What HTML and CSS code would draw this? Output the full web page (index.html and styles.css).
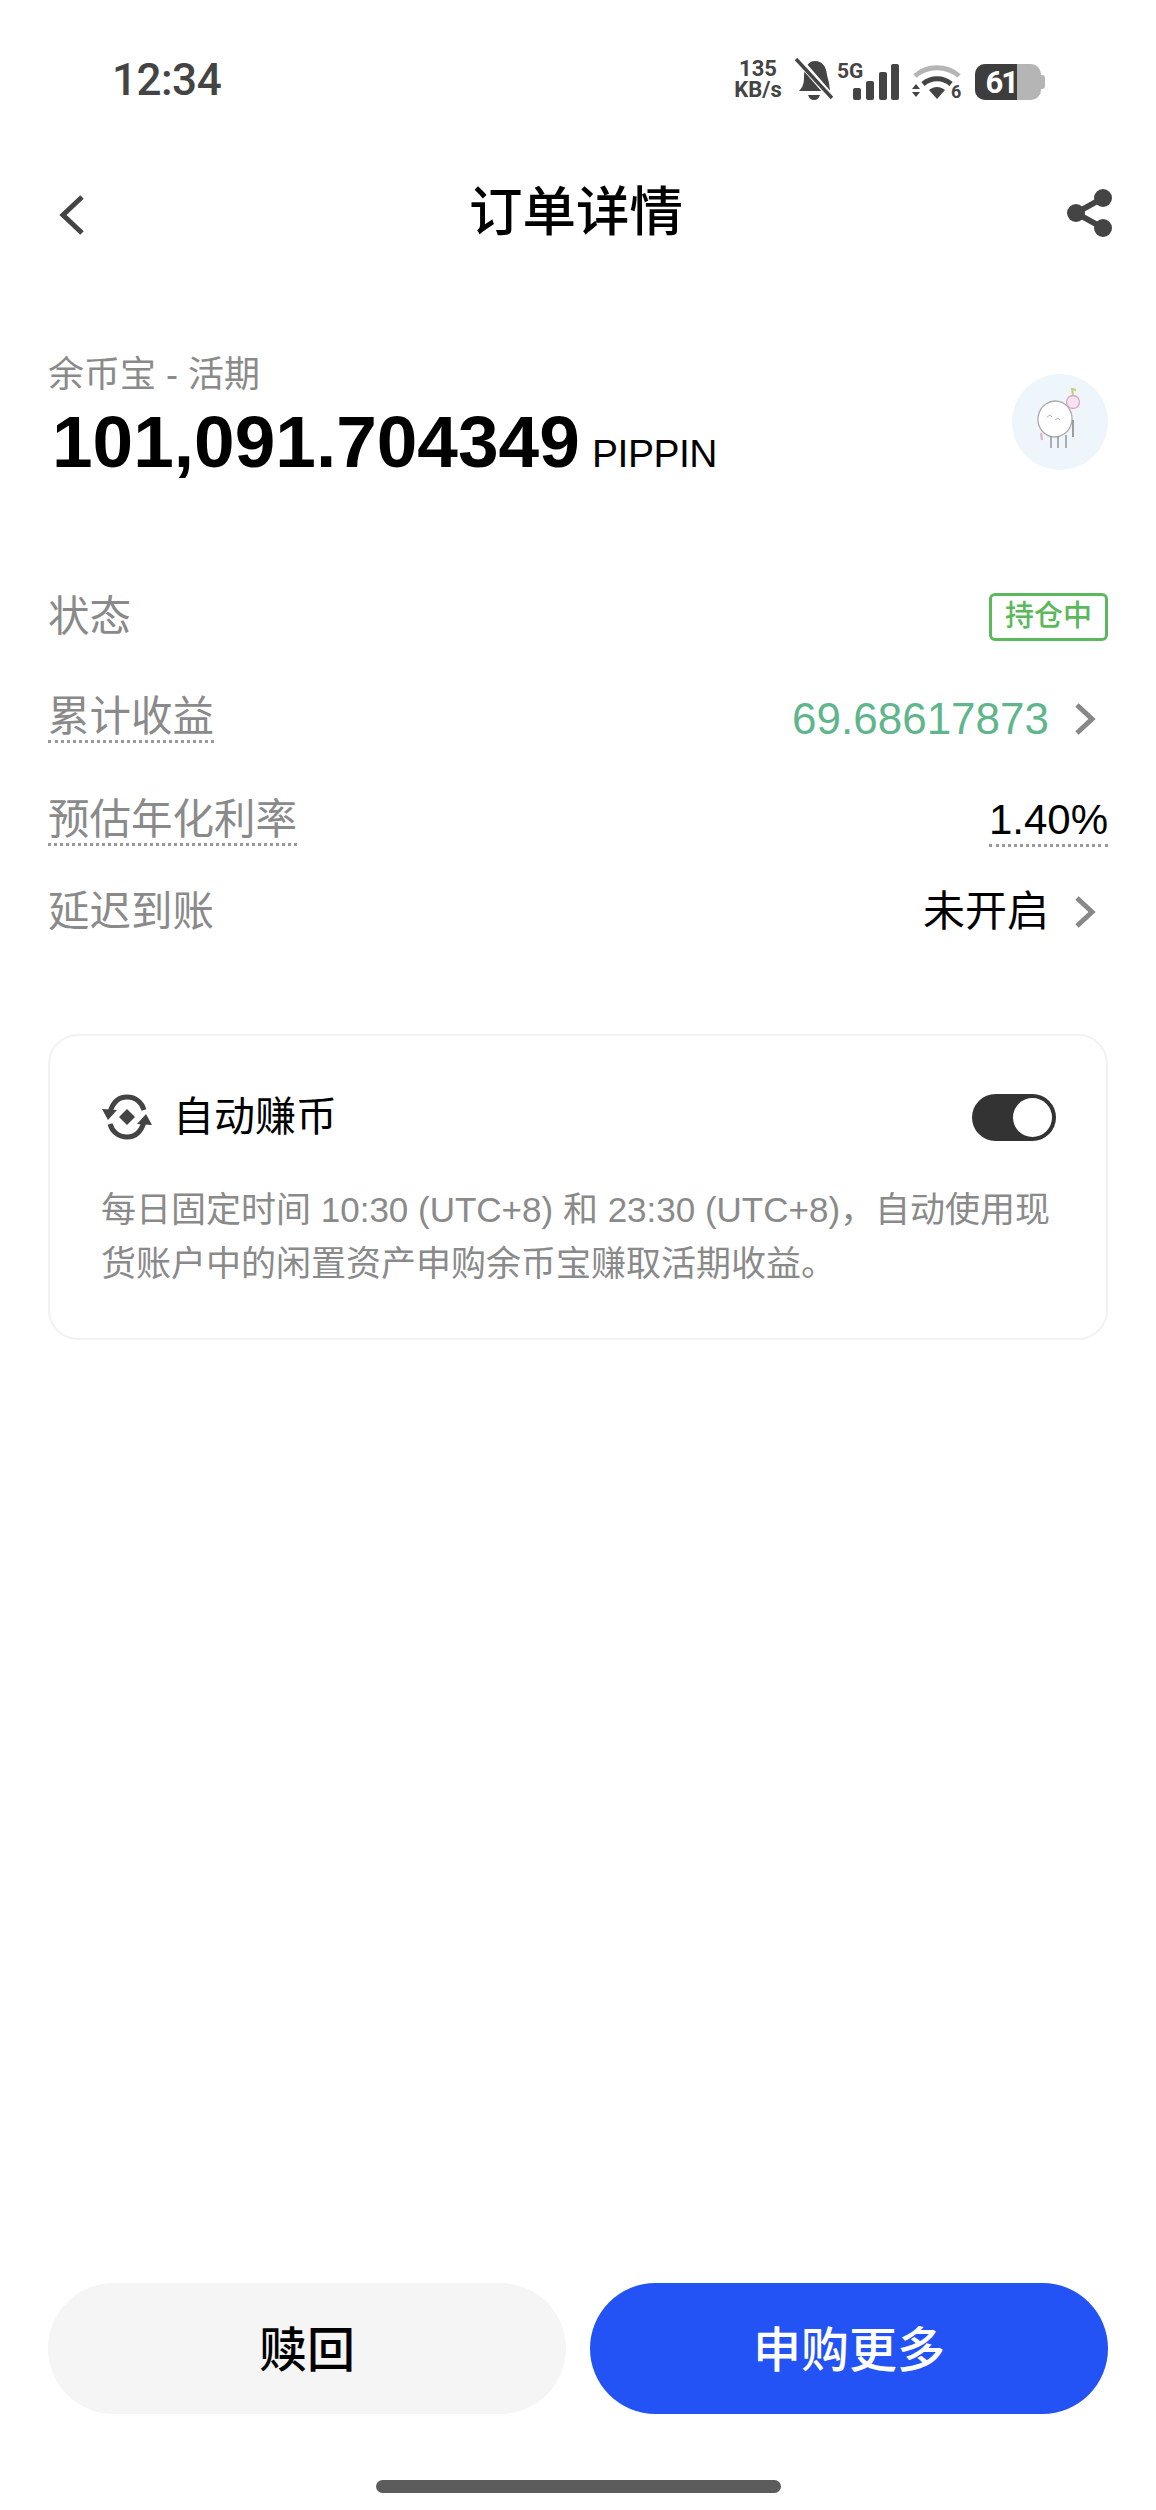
FILE: index.html
```html
<!DOCTYPE html>
<html lang="zh-CN">
<head>
  <meta charset="UTF-8" />
  <title>订单详情</title>
  <link rel="stylesheet" href="styles.css">
</head>
<body>
  <div class="page">
    <!-- status bar -->
    <div class="status-bar">
      <span class="clock">12:34</span>
      <div class="status-icons">
        <div class="net-speed"><span>135</span><span>KB/s</span></div>
        <svg class="ic-bell" width="38" height="42" viewBox="0 0 38 42">
          <path d="M4 33c4-4 5-8 5-14C9 10 13 3 20 3s11 5 12 14l2 8 1 8z" fill="#444"/>
          <path d="M13 37h12c-1 3-3 5-6 5s-5-2-6-5z" fill="#444"/>
          <path d="M3 1l33 38" stroke="#fff" stroke-width="7"/>
          <path d="M1 1l36 39" stroke="#444" stroke-width="3.5"/>
        </svg>
        <div class="signal">
          <span class="five-g">5G</span>
          <svg width="46" height="36" viewBox="0 0 46 36" fill="#444">
            <rect x="0" y="24" width="8" height="12" rx="2"/>
            <rect x="13" y="17" width="8" height="19" rx="2"/>
            <rect x="26" y="8" width="8" height="28" rx="2"/>
            <rect x="38" y="0" width="8" height="36" rx="2"/>
          </svg>
        </div>
        <svg class="ic-wifi" width="50" height="37" viewBox="0 0 50 37">
          <path d="M3 13c12-11 32-11 44 0" fill="none" stroke="#b5b5b5" stroke-width="5"/>
          <path d="M11 21c8-7 20-7 28 0" fill="none" stroke="#444" stroke-width="5"/>
          <path d="M17 27c5-4 11-4 16 0l-8 9z" fill="#444"/>
          <path d="M0 26l4-5 4 5zM0 29l4 5 4-5z" fill="#444"/>
          <text x="39" y="35" class="wifi-six">6</text>
        </svg>
        <div class="battery">
          <div class="battery-fill"><span>61</span></div>
        </div>
      </div>
    </div>

    <!-- header -->
    <div class="nav">
      <svg width="26" height="40" viewBox="0 0 26 40">
        <path d="M23 2L4 20l19 18" fill="none" stroke="#444" stroke-width="5"/>
      </svg>
      <h1>订单详情</h1>
      <svg class="ic-share" width="46" height="48" viewBox="0 0 46 48" fill="#444">
        <circle cx="36" cy="9" r="9"/>
        <circle cx="36" cy="39" r="9"/>
        <circle cx="9" cy="24" r="9"/>
        <path d="M9 24L36 9M9 24l27 15" stroke="#444" stroke-width="6"/>
      </svg>
    </div>

    <!-- summary -->
    <div class="summary">
      <div>
        <p class="product">余币宝 - 活期</p>
        <p class="amount">101,091.704349 <span>PIPPIN</span></p>
      </div>
      <div class="coin">
        <svg width="96" height="96" viewBox="0 0 96 96" fill="none" stroke="#aaa" stroke-width="1.3">
          <ellipse cx="43" cy="45" rx="17" ry="18" transform="rotate(12 43 45)" fill="#fff"/>
          <circle cx="61" cy="28" r="6.5" stroke="#d9a5c2" fill="#f7e3ee"/>
          <path d="M61 21l-1-6 4 1" stroke="#c6cf6c" stroke-width="2"/>
          <path d="M61 46v17" stroke="#888" stroke-width="1.6"/>
          <path d="M39 62v12M46 62v12M54 61v13" stroke="#888"/>
          <path d="M29 59l1 7" stroke="#eab3cc" stroke-width="2.4"/>
          <path d="M35 43l3-2 2 2M43 46l3-2 2 2" stroke-width="0.9"/>
        </svg>
      </div>
    </div>

    <!-- detail rows -->
    <div class="rows">
      <div class="row">
        <span class="label">状态</span>
        <span class="tag">持仓中</span>
      </div>
      <div class="row">
        <span class="label dotted">累计收益</span>
        <span class="value">
          <span class="profit">69.68617873</span>
          <svg class="chevron" width="24" height="32" viewBox="0 0 24 32"><path d="M4 2l15 14L4 30" /></svg>
        </span>
      </div>
      <div class="row">
        <span class="label dotted">预估年化利率</span>
        <span class="rate dotted">1.40%</span>
      </div>
      <div class="row row-delay">
        <span class="label">延迟到账</span>
        <span class="value">
          <span class="delay">未开启</span>
          <svg class="chevron" width="24" height="32" viewBox="0 0 24 32"><path d="M4 2l15 14L4 30" /></svg>
        </span>
      </div>
    </div>

    <!-- auto earn card -->
    <div class="card">
      <div class="card-head">
        <div class="card-title">
          <svg width="52" height="50" viewBox="0 0 52 50">
            <path d="M9 20C12 10 18 5 26 5c9 0 15 6 17 13M43 30c-3 10-9 15-17 15-9 0-15-6-17-13" fill="none" stroke="#444" stroke-width="5"/>
            <path d="M1 17l15 1-9 10zM51 33l-15-1 9-10z" fill="#444"/>
            <path d="M26 17l8 8-8 8-8-8z" fill="#444"/>
          </svg>
          <span>自动赚币</span>
        </div>
        <div class="switch"><div class="knob"></div></div>
      </div>
      <p class="desc">每日固定时间 10:30 (UTC+8) 和 23:30 (UTC+8)，自动使用现货账户中的闲置资产申购余币宝赚取活期收益。</p>
    </div>

    <!-- bottom buttons -->
    <div class="actions">
      <button class="btn btn-gray">赎回</button>
      <button class="btn btn-blue">申购更多</button>
    </div>
    <div class="home-bar"></div>
  </div>
</body>
</html>
```

FILE: styles.css
```css
* {
  box-sizing: border-box;
}

body {
  margin: 0;
  background: #fff;
  font-family: "Liberation Sans", "Noto Sans CJK SC", sans-serif;
  color: #000;
}

p, h1 {
  margin: 0;
}

.page {
  display: flex;
  flex-direction: column;
  width: 1156px;
  height: 2510px;
  padding: 0 48px;
}

/* status bar */
.status-bar {
  display: flex;
  align-items: center;
  justify-content: space-between;
  height: 42px;
  margin-top: 58px;
  padding: 0 63px 0 64px;
  color: #444;
}

.clock {
  padding-top: 2px;
  font-family: Roboto, sans-serif;
  font-size: 44px;
  font-weight: 500;
  letter-spacing: -0.5px;
}

.status-icons {
  display: flex;
  align-items: flex-end;
  height: 42px;
}

.net-speed {
  display: flex;
  flex-direction: column;
  align-items: center;
  width: 50px;
  font-family: Roboto, sans-serif;
  font-size: 22px;
  font-weight: 700;
  line-height: 21px;
}

.ic-bell {
  margin-left: 12px;
}

.signal {
  position: relative;
  margin-left: 20px;
  height: 36px;
}

.five-g {
  position: absolute;
  left: -16px;
  top: -2px;
  font-family: Roboto, sans-serif;
  font-size: 21px;
  font-weight: 700;
  line-height: 18px;
}

.ic-wifi {
  margin-left: 13px;
  overflow: visible;
}

.wifi-six {
  font-family: Roboto, sans-serif;
  font-size: 18px;
  font-weight: 700;
  fill: #444;
}

.battery {
  position: relative;
  width: 66px;
  height: 36px;
  margin: 0 4px 0 13px;
  border-radius: 10px;
  background: #b5b5b5;
}

.battery::after {
  content: "";
  position: absolute;
  top: 11px;
  right: -4px;
  width: 4px;
  height: 14px;
  border-radius: 0 3px 3px 0;
  background: #b5b5b5;
}

.battery-fill {
  display: flex;
  align-items: center;
  justify-content: flex-end;
  width: 42px;
  height: 36px;
  border-radius: 10px 0 0 10px;
  background: #3d3d3d;
  color: #fff;
  font-family: Roboto, sans-serif;
  font-size: 31px;
  font-weight: 700;
  letter-spacing: -2px;
  white-space: nowrap;
}

/* header */
.nav {
  display: flex;
  align-items: center;
  justify-content: space-between;
  height: 60px;
  margin-top: 85px;
  margin-right: -5px;
  padding-left: 11px;
}

h1 {
  font-size: 53.5px;
  font-weight: 500;
  line-height: 60px;
  margin-top: -4px;
}

.ic-share {
  margin-top: -5px;
}

/* summary */
.summary {
  display: flex;
  align-items: center;
  justify-content: space-between;
  margin-top: 106px;
}

.product {
  font-size: 36px;
  line-height: 48px;
  color: #8a8a8a;
}

.amount {
  margin-left: 4px;
  margin-top: 4px;
  font-size: 73px;
  font-weight: 700;
  line-height: 78px;
  white-space: nowrap;
}

.amount span {
  margin-left: -8px;
  font-size: 39px;
  font-weight: 400;
  letter-spacing: -0.5px;
}

.coin {
  width: 96px;
  height: 96px;
  border-radius: 50%;
  background: #eef6fc;
}

/* rows */
.rows {
  display: flex;
  flex-direction: column;
  gap: 53px;
  margin-top: 100px;
}

.row {
  display: flex;
  align-items: center;
  justify-content: space-between;
  min-height: 48px;
}

.row-delay {
  margin-top: -12px;
}

.label {
  font-size: 41.5px;
  line-height: 46px;
  color: #8a8a8a;
}

.dotted {
  border-bottom: 3px dotted #999;
}

.tag {
  width: 119px;
  height: 48px;
  border: 3px solid #5cb85c;
  border-radius: 6px;
  color: #5cb85c;
  font-size: 29px;
  font-weight: 500;
  line-height: 40px;
  text-align: center;
}

.value {
  display: flex;
  align-items: center;
  gap: 24px;
  margin-right: 11px;
}

.profit {
  font-size: 44px;
  line-height: 46px;
  color: #5fb58c;
}

.delay {
  font-size: 42px;
  line-height: 46px;
}

.rate {
  font-size: 42px;
  line-height: 48px;
}

.chevron {
  fill: none;
  stroke: #888;
  stroke-width: 5;
}

/* card */
.card {
  margin-top: 98px;
  height: 306px;
  padding: 56px 50px 0 51px;
  border: 2px solid #f2f2f2;
  border-radius: 30px;
}

.card-head {
  display: flex;
  align-items: center;
  justify-content: space-between;
}

.card-title {
  display: flex;
  align-items: center;
  gap: 20px;
  font-size: 41px;
  line-height: 50px;
}

.switch {
  position: relative;
  width: 84px;
  height: 47px;
  border-radius: 24px;
  background: #333;
}

.knob {
  position: absolute;
  top: 4px;
  right: 4px;
  width: 39px;
  height: 39px;
  border-radius: 50%;
  background: #fff;
}

.desc {
  margin-top: 41px;
  font-size: 35px;
  line-height: 54px;
  color: #8a8a8a;
}

/* buttons */
.actions {
  display: flex;
  gap: 24px;
  margin-top: auto;
}

.btn {
  flex: 1;
  height: 131px;
  padding: 0 0 6px;
  border: none;
  border-radius: 66px;
  font-family: inherit;
  font-size: 48px;
  font-weight: 500;
}

.btn-gray {
  background: #f5f5f5;
  color: #000;
}

.btn-blue {
  background: #2453f5;
  color: #fff;
}

.home-bar {
  width: 405px;
  height: 13px;
  margin: 66px auto 17px;
  border-radius: 7px;
  background: #5c5c5c;
}
```
